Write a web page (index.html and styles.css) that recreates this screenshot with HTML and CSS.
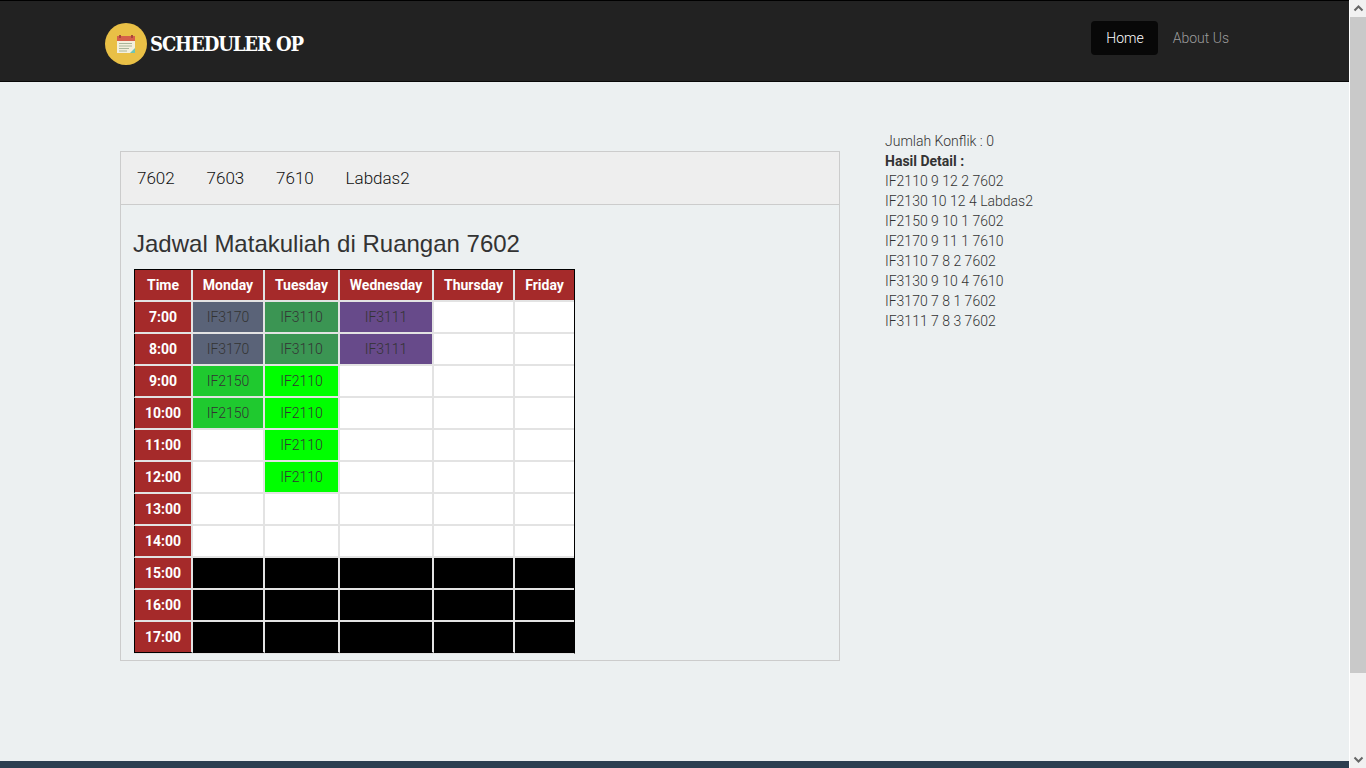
FILE: index.html
```html
<!DOCTYPE html>
<html>
<head>
    <title>Scheduler OP</title>
    <link rel="stylesheet" href="styles.css">
</head>
<body>
    <div class="page">
        <nav class="navbar">
            <a class="brand" href="#">
                <svg class="brand-icon" viewBox="0 0 42 42" width="42" height="42">
                    <circle cx="21" cy="21" r="21" fill="#e9c046"/>
                    <rect x="12" y="14" width="18" height="16" fill="#f3efdc"/>
                    <rect x="12" y="13" width="18" height="5" fill="#d5604a"/>
                    <rect x="14" y="12" width="2" height="3" fill="#a8473a"/>
                    <rect x="26" y="12" width="2" height="3" fill="#a8473a"/>
                    <path d="M14 20.500h13M14 23h13M14 25.500h10M14 28h8" stroke="#a9b59a" stroke-width="1"/>
                    <path d="M25 30l5-5v5z" fill="#6fc4b4"/>
                </svg>
                <span class="brand-name">SCHEDULER OP</span>
            </a>
            <ul class="nav-links">
                <li><a class="active" href="#">Home</a></li>
                <li><a href="#">About Us</a></li>
            </ul>
        </nav>

        <div class="content">
            <div class="panel">
                <div class="tabs">
                    <a href="#">7602</a>
                    <a href="#">7603</a>
                    <a href="#">7610</a>
                    <a href="#">Labdas2</a>
                </div>
                <div class="panel-body">
                    <h3>Jadwal Matakuliah di Ruangan 7602</h3>
                    <table class="schedule">
                        <colgroup>
                            <col class="col-time"><col class="col-mon"><col class="col-tue"><col class="col-wed"><col class="col-thu"><col class="col-fri">
                        </colgroup>
                        <thead>
                            <tr><th>Time</th><th>Monday</th><th>Tuesday</th><th>Wednesday</th><th>Thursday</th><th>Friday</th></tr>
                        </thead>
                        <tbody>
                            <tr><th>7:00</th><td class="slate">IF3170</td><td class="green">IF3110</td><td class="purple">IF3111</td><td></td><td></td></tr>
                            <tr><th>8:00</th><td class="slate">IF3170</td><td class="green">IF3110</td><td class="purple">IF3111</td><td></td><td></td></tr>
                            <tr><th>9:00</th><td class="leaf">IF2150</td><td class="lime">IF2110</td><td></td><td></td><td></td></tr>
                            <tr><th>10:00</th><td class="leaf">IF2150</td><td class="lime">IF2110</td><td></td><td></td><td></td></tr>
                            <tr><th>11:00</th><td></td><td class="lime">IF2110</td><td></td><td></td><td></td></tr>
                            <tr><th>12:00</th><td></td><td class="lime">IF2110</td><td></td><td></td><td></td></tr>
                            <tr><th>13:00</th><td></td><td></td><td></td><td></td><td></td></tr>
                            <tr><th>14:00</th><td></td><td></td><td></td><td></td><td></td></tr>
                            <tr><th>15:00</th><td class="closed"></td><td class="closed"></td><td class="closed"></td><td class="closed"></td><td class="closed"></td></tr>
                            <tr><th>16:00</th><td class="closed"></td><td class="closed"></td><td class="closed"></td><td class="closed"></td><td class="closed"></td></tr>
                            <tr class="last"><th>17:00</th><td class="closed"></td><td class="closed"></td><td class="closed"></td><td class="closed"></td><td class="closed"></td></tr>
                        </tbody>
                    </table>
                </div>
            </div>

            <div class="result">
                Jumlah Konflik : 0<br>
                <b>Hasil Detail :</b><br>
                IF2110 9 12 2 7602<br>
                IF2130 10 12 4 Labdas2<br>
                IF2150 9 10 1 7602<br>
                IF2170 9 11 1 7610<br>
                IF3110 7 8 2 7602<br>
                IF3130 9 10 4 7610<br>
                IF3170 7 8 1 7602<br>
                IF3111 7 8 3 7602
            </div>
        </div>

        <footer class="footer"></footer>
    </div>

    <div class="scrollbar">
        <span class="arrow">
            <svg viewBox="0 0 17 17" width="17" height="17"><path d="M4.500 10.500l4-4 4 4" fill="none" stroke="#666" stroke-width="2"/></svg>
        </span>
        <span class="thumb"></span>
        <span class="arrow">
            <svg viewBox="0 0 17 17" width="17" height="17"><path d="M4.500 6.500l4 4 4-4" fill="none" stroke="#666" stroke-width="2"/></svg>
        </span>
    </div>
</body>
</html>
```

FILE: styles.css
```css
html, body {
    height: 100%;
}

body {
    margin: 0;
    display: flex;
    overflow: hidden;
    font-family: Roboto, sans-serif;
    font-weight: 300;
    font-size: 14px;
    line-height: 20px;
    color: #333;
    background-color: #ecf0f1;
}

a {
    text-decoration: none;
}

.page {
    flex: 1;
    display: flex;
    flex-direction: column;
    min-width: 0;
}

/* navbar */
.navbar {
    height: 80px;
    flex-shrink: 0;
    display: flex;
    align-items: center;
    justify-content: space-between;
    padding: 0 105px 0 105px;
    background-color: #222;
    border-top: 1px solid #000;
    border-bottom: 1px solid #080808;
}

.brand {
    display: flex;
    align-items: center;
    gap: 3px;
    margin-top: 5px;
}

.brand-name {
    font-family: "DejaVu Serif Condensed", "DejaVu Serif", serif;
    font-stretch: condensed;
    font-weight: 700;
    font-size: 20px;
    letter-spacing: -1.100px;
    color: #fff;
}

.nav-links {
    display: flex;
    gap: 0;
    list-style: none;
    margin: 0 0 7px;
    padding: 0;
}

.nav-links a {
    display: block;
    padding: 7px 15px;
    border-radius: 4px;
    color: #9d9d9d;
    font-weight: 300;
}

.nav-links a.active {
    padding-right: 14px;
    color: #fff;
    background-color: #080808;
}

/* main */
.content {
    flex: 1;
    display: flex;
    align-items: flex-start;
    padding: 50px 0 0 120px;
}

.panel {
    width: 718px;
    border: 1px solid #ccc;
    margin-top: 19px;
    height: 508px;
}

.tabs {
    display: flex;
    gap: 31.800px;
    height: 52px;
    align-items: center;
    padding-left: 16px;
    background-color: #eee;
    border-bottom: 1px solid #ccc;
    font-size: 17px;
}

.tabs a {
    color: #111;
}

.panel-body {
    padding: 26px 12px 0 12px;
}

h3 {
    margin: 0 0 12px;
    font-family: "Liberation Sans", Arial, sans-serif;
    font-weight: 400;
    font-size: 24px;
    line-height: 26px;
    color: #333;
}

.schedule {
    table-layout: fixed;
    width: 440px;
    margin-left: 1px;
    border-collapse: separate;
    border-spacing: 0;
    background-color: #fff;
    border-top: 1px solid #000;
    border-right: 1px solid #000;
    border-bottom: 1px solid #e3e3e3;
}

.col-time { width: 59px; }
.col-mon { width: 72px; }
.col-tue { width: 75px; }
.col-wed { width: 94px; }
.col-thu { width: 81px; }
.col-fri { width: 59px; }

.schedule th,
.schedule td {
    height: 30px;
    padding: 0;
    text-align: center;
    border-right: 2px solid #e3e3e3;
    border-bottom: 2px solid #e3e3e3;
}

.schedule th:last-child,
.schedule td:last-child {
    border-right: 0;
}

.schedule .last th,
.schedule .last td {
    border-bottom: 1px solid #000;
}

.schedule th {
    font-weight: 700;
    color: #fff;
    background-color: #a52a2a;
}

.schedule tbody th,
.schedule thead th:first-child {
    border-left: 1px solid #000;
}

.slate { background-color: #5a6378; }
.green { background-color: #3b9553; }
.purple { background-color: #674a8a; }
.leaf { background-color: #1fc92f; }
.lime { background-color: #00ff00; }
.closed { background-color: #000; }

/* right column */
.result {
    margin-left: 45px;
    margin-top: -1px;
}

.result b {
    font-weight: 700;
}

.footer {
    height: 7px;
    flex-shrink: 0;
    background-color: #2c3e50;
}

/* window scrollbar */
.scrollbar {
    width: 17px;
    flex-shrink: 0;
    display: flex;
    flex-direction: column;
    background-color: #f1f1f1;
    border-left: 1px solid #fff;
    box-sizing: border-box;
}

.arrow {
    height: 17px;
    display: block;
}

.thumb {
    height: 656px;
    background-color: #c9c9c9;
}

.scrollbar .thumb + .arrow {
    margin-top: auto;
}
```
